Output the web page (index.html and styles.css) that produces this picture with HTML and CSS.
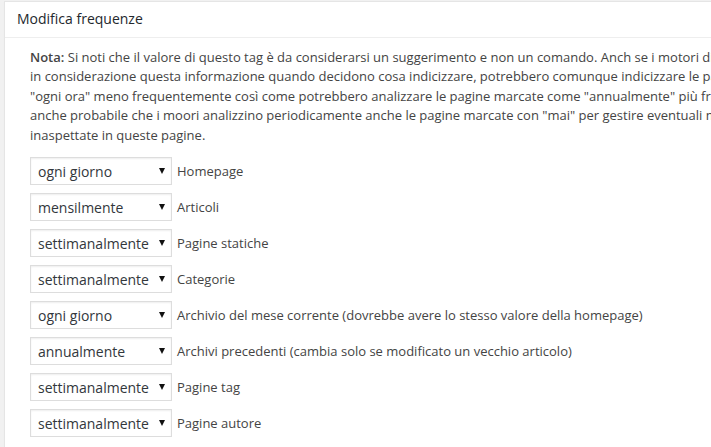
FILE: index.html
```html
<!doctype html>
<html lang="it">
<head>
<meta charset="utf-8">
<meta name="viewport" content="width=device-width, initial-scale=1">
<title>Modifica frequenze</title>
<link rel="stylesheet" href="styles.css">
</head>
<body>
<div class="postbox">
  <h3 class="hndle">Modifica frequenze</h3>
  <div class="inside">
    <p class="note"><b>Nota:</b> Si noti che il valore di questo tag è da considerarsi un suggerimento e non un comando. Anch se i motori di ricerca prendono<br>in considerazione questa informazione quando decidono cosa indicizzare, potrebbero comunque indicizzare le pagine marcate<br>"ogni ora" meno frequentemente così come potrebbero analizzare le pagine marcate come "annualmente" più frequentemente. È<br>anche probabile che i moori analizzino periodicamente anche le pagine marcate con "mai" per gestire eventuali modifiche<br>inaspettate in queste pagine.</p>

    <ul class="freq-list">
      <li><div class="select"><span>ogni giorno</span><i class="arrow"></i></div><label>Homepage</label></li>
      <li><div class="select"><span>mensilmente</span><i class="arrow"></i></div><label>Articoli</label></li>
      <li><div class="select"><span>settimanalmente</span><i class="arrow"></i></div><label>Pagine statiche</label></li>
      <li><div class="select"><span>settimanalmente</span><i class="arrow"></i></div><label>Categorie</label></li>
      <li><div class="select"><span>ogni giorno</span><i class="arrow"></i></div><label>Archivio del mese corrente (dovrebbe avere lo stesso valore della homepage)</label></li>
      <li><div class="select"><span>annualmente</span><i class="arrow"></i></div><label>Archivi precedenti (cambia solo se modificato un vecchio articolo)</label></li>
      <li><div class="select"><span>settimanalmente</span><i class="arrow"></i></div><label>Pagine tag</label></li>
      <li><div class="select"><span>settimanalmente</span><i class="arrow"></i></div><label>Pagine autore</label></li>
    </ul>
  </div>
</div>
</body>
</html>
```

FILE: styles.css
```css
html,body{margin:0;padding:0;background:#f1f1f1;overflow:hidden;font-family:"Open Sans",Arial,sans-serif;color:#444;}

.postbox{
  width:1000px;
  margin:1px 0 0 4px;
  background:#fff;
  border:1px solid #e5e5e5;
  box-shadow:0 1px 1px rgba(0,0,0,.04);
}

.hndle{
  margin:0;
  padding:7px 12px 8px;
  font-size:14px;
  font-weight:400;
  line-height:1.4;
  color:#23282d;
  border-bottom:1px solid #eee;
}

.inside{padding:10px 12px 12px 25px;}

/* the note is wider than the box; lines break where the original does */
.note{
  margin:0 0 12px;
  font-size:13px;
  line-height:19.5px;
  white-space:nowrap;
}
.note b{font-weight:600;}

/* frequency rows */
.freq-list{list-style:none;margin:0;padding:0;}
.freq-list li{
  display:flex;
  align-items:center;
  gap:5px;
  margin-bottom:8px;
  font-size:13px;
}

.select{
  width:127px;
  height:26px;
  display:flex;
  align-items:center;
  justify-content:space-between;
  padding:0 6px 0 7px;
  border:1px solid #ddd;
  box-shadow:inset 0 1px 2px rgba(0,0,0,.07);
  background:#fff;
  color:#32373c;
  font-size:14px;
}
.arrow{
  width:0;height:0;
  border-left:3px solid transparent;
  border-right:3px solid transparent;
  border-top:6px solid #111;
}
```
